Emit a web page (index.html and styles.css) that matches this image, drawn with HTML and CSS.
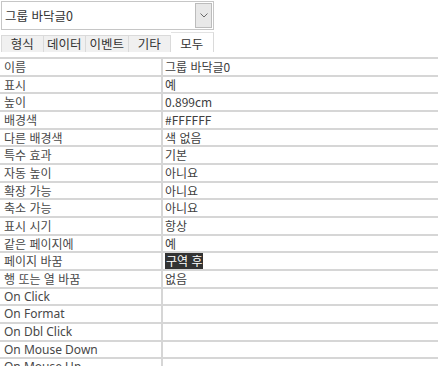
FILE: index.html
```html
<!DOCTYPE html>
<html lang="ko">
<head>
    <meta charset="UTF-8">
    <title>속성 시트</title>
    <link rel="stylesheet" href="styles.css">
</head>
<body>

<div class="combo">
    <span class="combo-text">그룹 바닥글0</span>
    <span class="combo-btn">
        <svg width="8" height="5" viewBox="0 0 8 5"><path d="M0.5 0.5 L4 4 L7.5 0.5" fill="none" stroke="#6a6a6a" stroke-width="1"/></svg>
    </span>
</div>

<div class="tabs">
    <div class="tab">형식</div>
    <div class="tab">데이터</div>
    <div class="tab">이벤트</div>
    <div class="tab">기타</div>
    <div class="tab active">모두</div>
</div>

<div class="props">
    <div class="row"><div class="name">이름</div><div class="value">그룹 바닥글0</div></div>
    <div class="row"><div class="name">표시</div><div class="value">예</div></div>
    <div class="row"><div class="name">높이</div><div class="value">0.899cm</div></div>
    <div class="row"><div class="name">배경색</div><div class="value">#FFFFFF</div></div>
    <div class="row"><div class="name">다른 배경색</div><div class="value">색 없음</div></div>
    <div class="row"><div class="name">특수 효과</div><div class="value">기본</div></div>
    <div class="row"><div class="name">자동 높이</div><div class="value">아니요</div></div>
    <div class="row"><div class="name">확장 가능</div><div class="value">아니요</div></div>
    <div class="row"><div class="name">축소 가능</div><div class="value">아니요</div></div>
    <div class="row"><div class="name">표시 시기</div><div class="value">항상</div></div>
    <div class="row"><div class="name">같은 페이지에</div><div class="value">예</div></div>
    <div class="row"><div class="name">페이지 바꿈</div><div class="value"><span class="selected">구역 후</span></div></div>
    <div class="row"><div class="name">행 또는 열 바꿈</div><div class="value">없음</div></div>
    <div class="row"><div class="name latin">On Click</div><div class="value"></div></div>
    <div class="row"><div class="name latin">On Format</div><div class="value"></div></div>
    <div class="row"><div class="name latin">On Dbl Click</div><div class="value"></div></div>
    <div class="row"><div class="name latin">On Mouse Down</div><div class="value"></div></div>
    <div class="row"><div class="name latin">On Mouse Up</div><div class="value"></div></div>
</div>

</body>
</html>
```

FILE: styles.css
```css
body {
    margin: 0;
    padding: 0;
    background: #fff;
    font-family: "Noto Sans CJK KR", "Noto Sans", sans-serif;
    font-size: 12px;
    color: #484848;
    overflow: hidden;
}
.combo {
    display: flex;
    align-items: center;
    justify-content: space-between;
    box-sizing: border-box;
    width: 213px;
    height: 29px;
    margin: 1px 0 0 1px;
    border: 1px solid #c6c6c6;
    padding: 0 1px 0 3px;
}
.combo-text {
    font-size: 12.5px;
    color: #333;
}
.combo-btn {
    display: flex;
    align-items: center;
    justify-content: center;
    box-sizing: border-box;
    width: 17px;
    height: 25px;
    background: #e8e8e8;
    border: 1px solid #bcbcbc;
}
.tabs {
    display: flex;
    align-items: flex-end;
    height: 20px;
    margin: 2px 0 0 1px;
}
.tab {
    box-sizing: border-box;
    width: 42.5px;
    height: 17px;
    line-height: 16px;
    text-align: center;
    font-size: 12.5px;
    color: #333;
    background: #f0f0f0;
    border: 1px solid #dadada;
    border-left: none;
    border-bottom: none;
}
.tab:first-child {
    border-left: 1px solid #dadada;
}
.tab.active {
    height: 20px;
    line-height: 21px;
    background: #fff;
    border-top-color: #e2e2e2;
}
.props {
    margin-top: 5px;
    border-top: 2px solid #d6d6d6;
}
.row {
    display: grid;
    grid-template-columns: 163px 1fr;
    box-sizing: border-box;
    height: 17.67px;
    border-bottom: 2px solid #d6d6d6;
}
.name, .value {
    line-height: 16px;
    white-space: nowrap;
    overflow: hidden;
}
.name {
    padding-left: 4px;
    border-right: 2px solid #d6d6d6;
}
.value {
    padding-left: 2px;
    color: #404040;
}
.latin {
    font-family: "Noto Sans", sans-serif;
    font-size: 12px;
}
.selected {
    display: inline-block;
    height: 16px;
    padding: 0 1px;
    background: #333;
    color: #fff;
}
```
